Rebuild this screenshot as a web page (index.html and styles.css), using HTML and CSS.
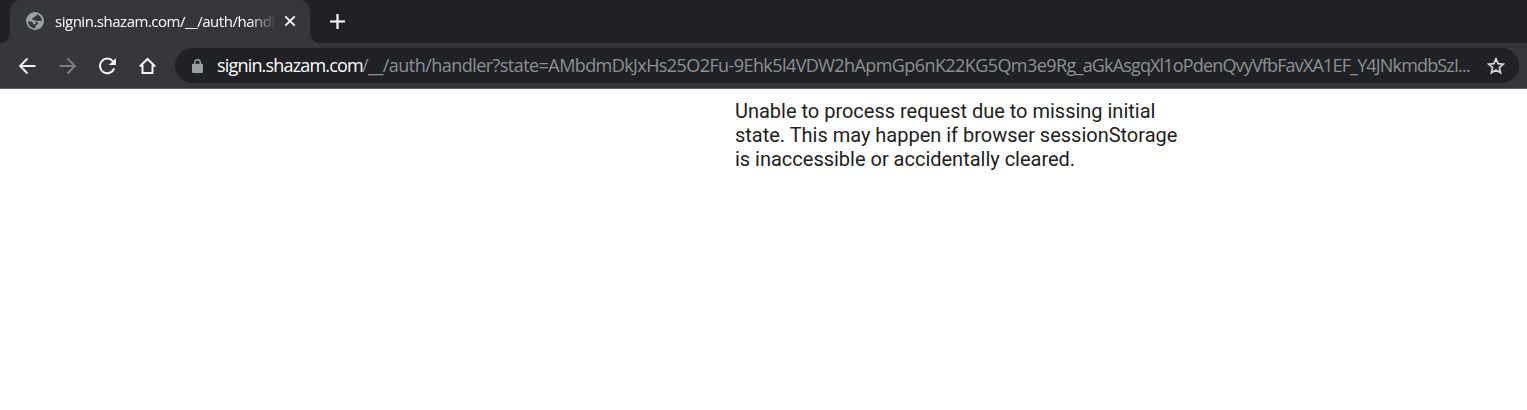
FILE: index.html
```html
<!DOCTYPE html>
<html lang="en">
<head>
<meta charset="utf-8">
<title>signin.shazam.com</title>
<link rel="stylesheet" href="styles.css">
</head>
<body>
<header class="browser">
  <div class="tabstrip">
    <div class="tab">
      <svg class="globe" width="18" height="18" viewBox="0 0 18 18"><circle cx="9" cy="9" r="9" fill="#9aa0a6"/><path d="M10.5 2.2C11.2 4.4 8.4 4.2 8 5.3C7.6 6.4 5.6 6 5.6 7.3C5.8 8.5 8.8 7.2 9.4 9.1C9.8 10.5 12.2 10 12.2 11.3C12.2 12.7 10 12.3 9.5 14L9.4 16C5 16.3 2 13 2 9.2L5.6 9.8C7.4 10.4 6.6 11.8 7.6 12.2L9.3 12.3C10 11.8 10.3 11.1 9.7 10.6C8.6 10 8.6 8.8 9.7 8.5L12.2 9H14.2L16 8.4C15.6 5.2 13.5 2.9 10.5 2.2Z" fill="#35363a"/></svg>
      <span class="tab-title">signin.shazam.com/__/auth/handl</span>
      <svg class="close" width="12" height="12" viewBox="0 0 12 12"><path d="M1.3 1.3L10.7 10.7M10.7 1.3L1.3 10.7" stroke="#fff" stroke-width="1.9"/></svg>
    </div>
    <svg class="plus" width="15" height="15" viewBox="0 0 15 15"><path d="M7.5 0V15M0 7.5H15" stroke="#fff" stroke-width="2.2"/></svg>
  </div>
  <div class="toolbar">
    <nav class="nav">
      <svg width="18" height="18" viewBox="0 0 18 18"><path d="M17.5 9H2.5M9.5 1.5L2.1 9L9.5 16.5" fill="none" stroke="#f1f3f4" stroke-width="1.9"/></svg>
      <svg width="18" height="18" viewBox="0 0 18 18"><path d="M1.5 9H16.5M9.5 1.5L16.9 9L9.5 16.5" fill="none" stroke="#7d7e81" stroke-width="1.9"/></svg>
      <svg width="18" height="18" viewBox="0 0 18 18"><path d="M16.2 11.3A7.3 7.3 0 1 1 14.8 4.1" fill="none" stroke="#f1f3f4" stroke-width="2"/><path d="M17.9 1V8H10.9Z" fill="#f1f3f4"/></svg>
      <svg width="18" height="18" viewBox="0 0 18 18"><path d="M1.8 9.5L9.5 2L17.2 9.5M4.5 8V16H14.5V8" fill="none" stroke="#f1f3f4" stroke-width="2"/></svg>
    </nav>
    <div class="omnibox">
      <svg class="lock" width="11" height="14" viewBox="0 0 11 14"><path d="M2.7 6V3.5a2.8 2.8 0 0 1 5.6 0V6" fill="none" stroke="#9aa0a6" stroke-width="1.4"/><rect y="4.8" width="11" height="9.2" rx="1.2" fill="#9aa0a6"/></svg>
      <div class="url"><span class="host">signin.shazam.com</span><span class="path">/__/auth/handler?state=</span><span class="path token">AMbdmDkJxHs25O2Fu-9Ehk5l4VDW2hApmGp6nK22KG5Qm3e9Rg</span><span class="path token-end">_aGkAsgqXl1oPdenQvyVfbFavXA1EF_Y4JNkmdbSzI...</span></div>
      <svg class="star" width="18" height="18" viewBox="0 0 18 18"><path d="M9 1.8L11.1 6.6L16.4 7.1L12.4 10.6L13.6 15.8L9 13L4.4 15.8L5.6 10.6L1.6 7.1L6.9 6.6Z" fill="none" stroke="#d5d6d8" stroke-width="1.7"/></svg>
    </div>
  </div>
</header>
<main class="page">
  <p class="message">Unable to process request due to missing initial<br>state. This may happen if browser sessionStorage<br>is inaccessible or accidentally cleared.</p>
</main>
</body>
</html>
```
FILE: styles.css
```css
* { box-sizing: border-box; }
body { margin: 0; background: #fff; }
svg { display: block; flex: none; }
.browser { height: 89px; background: #35363a; border-bottom: 1px solid #5d5e61; }
.tabstrip { height: 43px; display: flex; padding-left: 10px; background: #202124; }
.tab { position: relative; width: 300px; height: 43px; display: flex; align-items: center; padding: 0 0 1px 16px; background: #35363a; border-radius: 10px 10px 0 0; }
.tab::before, .tab::after { content: ""; position: absolute; bottom: 0; width: 10px; height: 10px; }
.tab::before { left: -10px; background: radial-gradient(circle at 0 0, transparent 9.5px, #35363a 10.5px); }
.tab::after { right: -10px; background: radial-gradient(circle at 100% 0, transparent 9.5px, #35363a 10.5px); }
.tab-title { width: 224px; margin-left: 11px; padding-bottom: 1px; white-space: nowrap; color: #fff; font: 15px/22px "Open Sans", "Noto Sans", sans-serif; letter-spacing: -.48px; -webkit-mask-image: linear-gradient(90deg, #000 194px, transparent 221px); mask-image: linear-gradient(90deg, #000 194px, transparent 221px); }
.close { margin-left: 5px; }
.plus { margin: 14px 0 0 20px; }
.toolbar { height: 45px; display: flex; padding: 5px 8px 5px 18px; }
.nav { display: flex; flex: none; align-items: center; gap: 22px; width: 157px; }
.omnibox { flex: 1; min-width: 0; height: 35px; display: flex; align-items: center; padding: 0 14px 0 17px; border-radius: 18px; background: #202124; }
.url { flex: 1; min-width: 0; margin-left: 14px; padding-bottom: 2px; white-space: nowrap; font: 18px/26px "Open Sans", "Noto Sans", sans-serif; }
.host { display: inline-block; width: 145px; color: #fff; letter-spacing: -.82px; }
.path { color: #8d9093; letter-spacing: -.54px; }
.token { letter-spacing: -.58px; }
.token-end { letter-spacing: -.84px; }
.page { padding: 10px 0 0 735px; }
.message { margin: 0; color: #212121; font: 20px/24px Roboto, sans-serif; letter-spacing: -.01px; white-space: nowrap; }
```
